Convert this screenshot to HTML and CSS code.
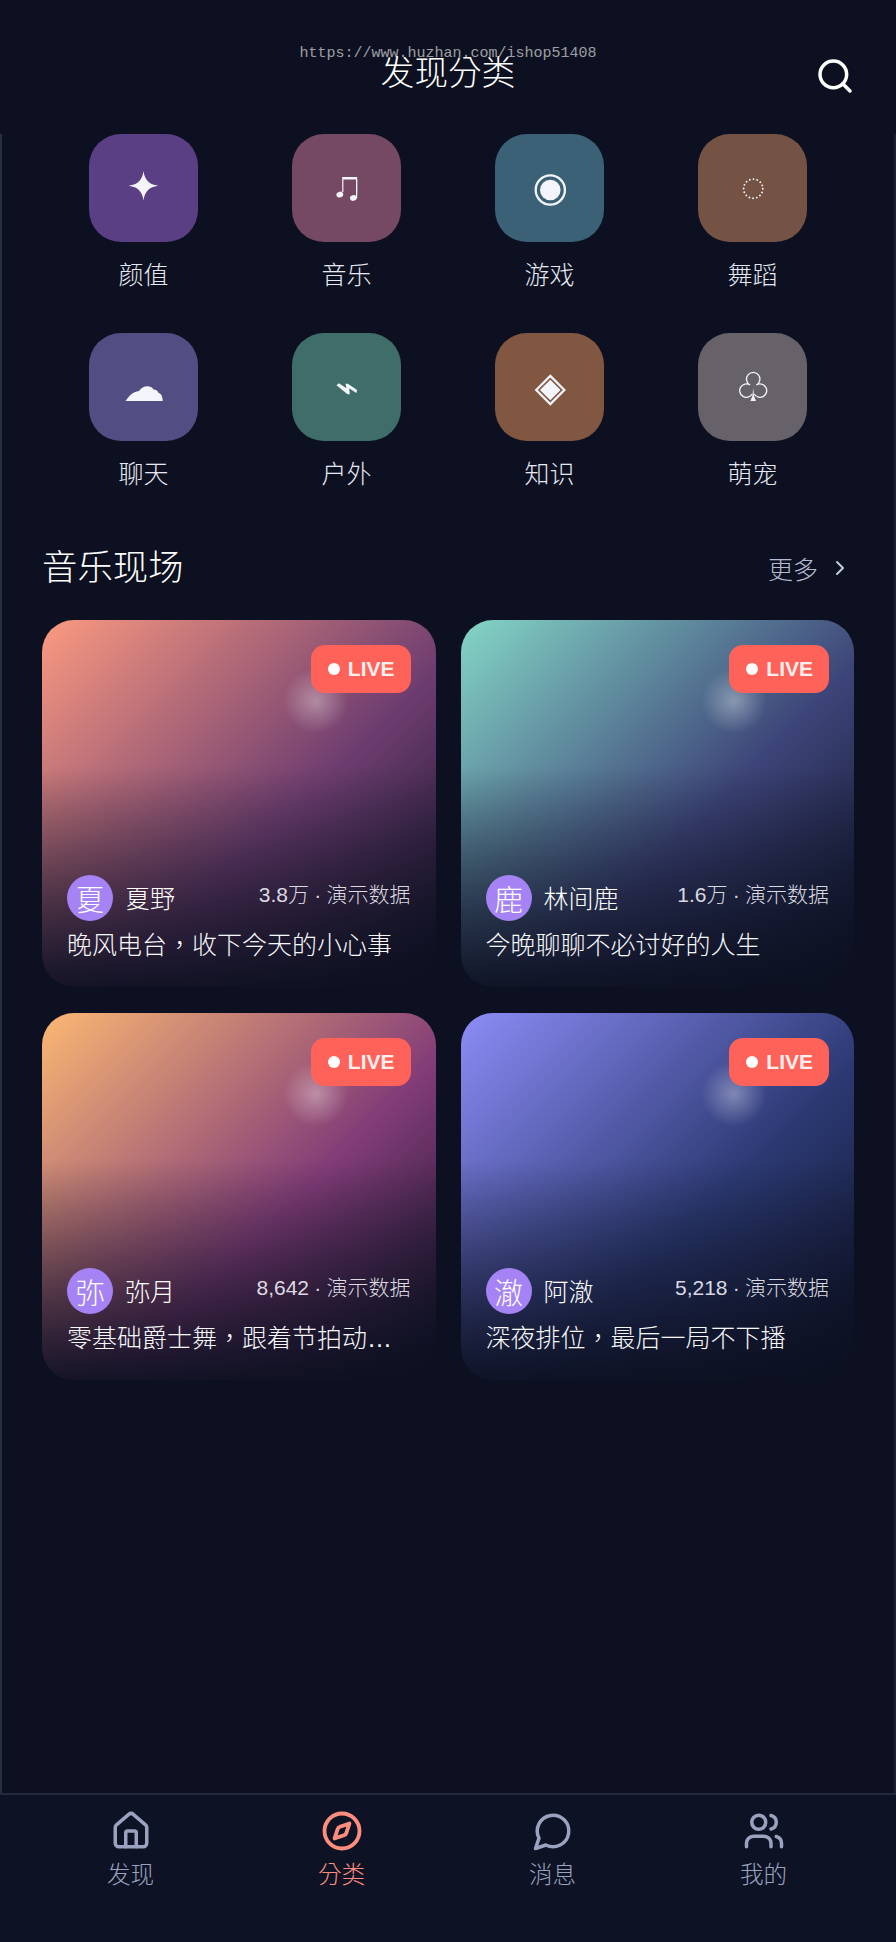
FILE: index.html
```html
<!DOCTYPE html>
<html>
<head>
  <meta charset="UTF-8">
  <meta name="viewport" content="width=device-width, initial-scale=1.0">
  <title>发现分类</title>
  <link rel="stylesheet" href="styles.css">
</head>
<body>
<div class="page">
  <div class="watermark">https://www.huzhan.com/ishop51408</div>

  <header class="top-bar">
    <h1 class="top-title">发现分类</h1>
    <svg class="search-icon" viewBox="0 0 24 24" fill="none" stroke="currentColor" stroke-width="2.1" stroke-linecap="round" stroke-linejoin="round">
      <path d="m21 21-4.34-4.34"/>
      <circle cx="11" cy="11" r="8"/>
    </svg>
  </header>

  <main class="content">
    <div class="cat-grid">
      <div class="cat">
        <div class="cat-tile tile-purple">
          <svg class="tile-icon" viewBox="0 0 60 60"><path fill="currentColor" d="M29.5 12C30.8 21 35 25.5 44.2 26.7 35 28 30.8 32.4 29.5 41.4 28.2 32.4 24 28 14.8 26.7 24 25.5 28.2 21 29.5 12Z"/></svg>
        </div>
        <span class="cat-name">颜值</span>
      </div>
      <div class="cat">
        <div class="cat-tile tile-rose">
          <svg class="tile-icon" viewBox="0 0 60 60" fill="currentColor">
            <path d="M25.2 18H40.2V35H39V20.6H26.4V33H25.2Z"/>
            <path d="M39 20H40.2V39H39Z"/>
            <ellipse cx="22.8" cy="35.6" rx="3.5" ry="2.8" transform="rotate(-20 22.8 35.6)"/>
            <ellipse cx="36.4" cy="38.9" rx="3.5" ry="2.8" transform="rotate(-20 36.4 38.9)"/>
          </svg>
        </div>
        <span class="cat-name">音乐</span>
      </div>
      <div class="cat">
        <div class="cat-tile tile-teal">
          <svg class="tile-icon" viewBox="0 0 60 60">
            <circle cx="30.3" cy="31" r="14.6" fill="none" stroke="currentColor" stroke-width="2.3"/>
            <circle cx="30.3" cy="31" r="10.3" fill="currentColor"/>
          </svg>
        </div>
        <span class="cat-name">游戏</span>
      </div>
      <div class="cat">
        <div class="cat-tile tile-brown">
          <svg class="tile-icon" viewBox="0 0 60 60">
            <circle cx="30.2" cy="29.7" r="9.6" fill="none" stroke="currentColor" stroke-width="1.9" stroke-linecap="round" stroke-dasharray="0 3.77"/>
          </svg>
        </div>
        <span class="cat-name">舞蹈</span>
      </div>
      <div class="cat">
        <div class="cat-tile tile-indigo">
          <svg class="tile-icon" viewBox="0 0 60 60"><path fill="currentColor" d="M11.5 43C14 39.5 16.5 36 20 34.5 22 33.5 23.5 33.5 25 33 27 29.5 31 28 34 28.3 37 28.5 38.5 30 39.5 31.5 42 31.5 44 33 44.5 35 47 35.5 48.6 38 48.8 43Z"/></svg>
        </div>
        <span class="cat-name">聊天</span>
      </div>
      <div class="cat">
        <div class="cat-tile tile-green">
          <svg class="tile-icon" viewBox="0 0 60 60"><path fill="currentColor" d="M19.5 27.3 21.8 25.3 29.5 30.3 28.5 25.7H30.8L40.2 32 39.2 35 32.2 30.3 32.8 36.3H30.5Z"/></svg>
        </div>
        <span class="cat-name">户外</span>
      </div>
      <div class="cat">
        <div class="cat-tile tile-copper">
          <svg class="tile-icon" viewBox="0 0 60 60">
            <path d="M30.3 17.9 44.4 32 30.3 46.1 16.2 32Z" fill="none" stroke="currentColor" stroke-width="2.2"/>
            <path d="M30.3 21.7 40.6 32 30.3 42.3 20 32Z" fill="currentColor"/>
          </svg>
        </div>
        <span class="cat-name">知识</span>
      </div>
      <div class="cat">
        <div class="cat-tile tile-gray">
          <svg class="tile-icon" viewBox="0 0 60 60">
            <path d="M27 27A6.7 6.7 0 1 1 33.4 27 6.7 6.7 0 1 1 31.2 36M27 27A6.7 6.7 0 1 0 29.2 36" fill="none" stroke="currentColor" stroke-width="1.3"/>
            <path d="M30.2 30 31 38 33 43H27.4L29.4 38Z" fill="currentColor"/>
          </svg>
        </div>
        <span class="cat-name">萌宠</span>
      </div>
    </div>

    <div class="section-head">
      <h2 class="section-title">音乐现场</h2>
      <div class="section-more">
        <span>更多</span>
        <svg class="more-icon" viewBox="0 0 24 24" fill="none" stroke="currentColor" stroke-width="2" stroke-linecap="round" stroke-linejoin="round"><path d="m9 18 6-6-6-6"/></svg>
      </div>
    </div>

    <div class="live-grid">
      <article class="live-card card-coral">
        <div class="glow"></div>
        <div class="live-badge"><i class="live-dot"></i>LIVE</div>
        <div class="live-info">
          <div class="live-row">
            <div class="avatar">夏</div>
            <span class="host">夏野</span>
            <span class="meta">3.8万 · 演示数据</span>
          </div>
          <div class="live-title">晚风电台，收下今天的小心事</div>
        </div>
      </article>
      <article class="live-card card-mint">
        <div class="glow"></div>
        <div class="live-badge"><i class="live-dot"></i>LIVE</div>
        <div class="live-info">
          <div class="live-row">
            <div class="avatar">鹿</div>
            <span class="host">林间鹿</span>
            <span class="meta">1.6万 · 演示数据</span>
          </div>
          <div class="live-title">今晚聊聊不必讨好的人生</div>
        </div>
      </article>
      <article class="live-card card-amber">
        <div class="glow"></div>
        <div class="live-badge"><i class="live-dot"></i>LIVE</div>
        <div class="live-info">
          <div class="live-row">
            <div class="avatar">弥</div>
            <span class="host">弥月</span>
            <span class="meta">8,642 · 演示数据</span>
          </div>
          <div class="live-title">零基础爵士舞，跟着节拍动…</div>
        </div>
      </article>
      <article class="live-card card-violet">
        <div class="glow"></div>
        <div class="live-badge"><i class="live-dot"></i>LIVE</div>
        <div class="live-info">
          <div class="live-row">
            <div class="avatar">澈</div>
            <span class="host">阿澈</span>
            <span class="meta">5,218 · 演示数据</span>
          </div>
          <div class="live-title">深夜排位，最后一局不下播</div>
        </div>
      </article>
    </div>
  </main>

  <nav class="tab-bar">
    <div class="tab">
      <svg class="tab-icon" viewBox="0 0 24 24" fill="none" stroke="currentColor" stroke-width="2" stroke-linecap="round" stroke-linejoin="round">
        <path d="M15 21v-8a1 1 0 0 0-1-1h-4a1 1 0 0 0-1 1v8"/>
        <path d="M3 10a2 2 0 0 1 .709-1.528l7-5.999a2 2 0 0 1 2.582 0l7 5.999A2 2 0 0 1 21 10v9a2 2 0 0 1-2 2H5a2 2 0 0 1-2-2z"/>
      </svg>
      <span>发现</span>
    </div>
    <div class="tab tab-active">
      <svg class="tab-icon" viewBox="0 0 24 24" fill="none" stroke="currentColor" stroke-width="2.2" stroke-linecap="round" stroke-linejoin="round">
        <circle cx="12" cy="12" r="10"/>
        <path d="m16.24 7.76-1.804 5.411a2 2 0 0 1-1.265 1.265L7.76 16.24l1.804-5.411a2 2 0 0 1 1.265-1.265z"/>
      </svg>
      <span>分类</span>
    </div>
    <div class="tab">
      <svg class="tab-icon" viewBox="0 0 24 24" fill="none" stroke="currentColor" stroke-width="2" stroke-linecap="round" stroke-linejoin="round">
        <path d="M7.9 20A9 9 0 1 0 4 16.1L2 22Z"/>
      </svg>
      <span>消息</span>
    </div>
    <div class="tab">
      <svg class="tab-icon" viewBox="0 0 24 24" fill="none" stroke="currentColor" stroke-width="2" stroke-linecap="round" stroke-linejoin="round">
        <path d="M16 21v-2a4 4 0 0 0-4-4H6a4 4 0 0 0-4 4v2"/>
        <circle cx="9" cy="7" r="4"/>
        <path d="M22 21v-2a4 4 0 0 0-3-3.87"/>
        <path d="M16 3.13a4 4 0 0 1 0 7.75"/>
      </svg>
      <span>我的</span>
    </div>
  </nav>
</div>
</body>
</html>
```

FILE: styles.css
```css
* {
  box-sizing: border-box;
}
body {
  margin: 0;
  background-color: #0c1020;
  color: #f3f5fb;
  font-family: "Liberation Sans", "Noto Sans CJK TC", sans-serif;
  font-weight: 300;
}
.page {
  position: relative;
  display: flex;
  flex-direction: column;
  height: 1942px;
  overflow: hidden;
}
.watermark {
  position: absolute;
  top: 44px;
  left: 0;
  width: 100%;
  text-align: center;
  font-family: "Liberation Mono", monospace;
  font-size: 15px;
  line-height: 20px;
  font-weight: 400;
  color: rgba(255, 255, 255, 0.6);
}

/* header */
.top-bar {
  display: grid;
  grid-template-columns: 1fr auto 1fr;
  align-items: center;
  height: 134px;
  padding: 10px 41px 0;
}
.top-title {
  grid-column: 2;
  margin: 0 0 4px;
  font-size: 33.6px;
  font-weight: 300;
  color: #fff;
}
.search-icon {
  justify-self: end;
  width: 40px;
  height: 40px;
  margin-top: 8px;
  color: #fff;
}

/* middle */
.content {
  flex: 1;
  padding: 0 40px;
  border-left: 2px solid #2a2f3e;
  border-right: 2px solid #1b1f2e;
}
.cat-grid {
  display: grid;
  grid-template-columns: repeat(4, 1fr);
  row-gap: 40px;
}
.cat {
  display: flex;
  flex-direction: column;
  align-items: center;
  gap: 16px;
}
.cat-tile {
  display: flex;
  align-items: center;
  justify-content: center;
  width: 109px;
  height: 108px;
  border-radius: 32px;
  color: #f3f5fb;
}
.tile-icon {
  width: 60px;
  height: 60px;
  margin-top: 2px;
}
.cat-name {
  font-size: 25px;
  line-height: 35px;
  color: #e6e9f4;
}
.tile-purple { background-color: #5a3f85; }
.tile-rose { background-color: #754863; }
.tile-teal { background-color: #3b6176; }
.tile-brown { background-color: #745344; }
.tile-indigo { background-color: #524e83; }
.tile-green { background-color: #3f6e6a; }
.tile-copper { background-color: #825741; }
.tile-gray { background-color: #67626a; }

.section-head {
  display: flex;
  justify-content: space-between;
  align-items: center;
  margin: 51px 0 27px;
}
.section-title {
  margin: 0;
  font-size: 35.4px;
  line-height: 50px;
  font-weight: 300;
  color: #fff;
}
.section-more {
  display: flex;
  align-items: center;
  gap: 10px;
  margin-right: 2px;
  font-size: 25px;
  color: #b4bad0;
}
.more-icon {
  width: 24px;
  height: 24px;
  color: #c5cad9;
}

/* live cards */
.live-grid {
  display: grid;
  grid-template-columns: 1fr 1fr;
  gap: 26px 25px;
}
.live-card {
  position: relative;
  display: flex;
  flex-direction: column;
  justify-content: flex-end;
  height: 367px;
  padding: 0 25px 24px;
  border-radius: 32px;
  overflow: hidden;
}
.card-coral {
  background: linear-gradient(180deg, rgba(12, 16, 32, 0) 40%, rgba(12, 16, 32, 0.93) 100%),
    linear-gradient(135deg, #fb9a80 0%, #6e3d70 58%, #0c1024 100%);
}
.card-mint {
  background: linear-gradient(180deg, rgba(12, 16, 32, 0) 40%, rgba(12, 16, 32, 0.93) 100%),
    linear-gradient(135deg, #84d6c6 0%, #3d4478 58%, #0c1024 100%);
}
.card-amber {
  background: linear-gradient(180deg, rgba(12, 16, 32, 0) 40%, rgba(12, 16, 32, 0.93) 100%),
    linear-gradient(135deg, #fbb873 0%, #823c78 58%, #0c1024 100%);
}
.card-violet {
  background: linear-gradient(180deg, rgba(12, 16, 32, 0) 40%, rgba(12, 16, 32, 0.93) 100%),
    linear-gradient(135deg, #8d8cf6 0%, #2c3a74 58%, #0c1024 100%);
}
.glow {
  position: absolute;
  top: 48px;
  right: 87px;
  width: 66px;
  height: 66px;
  border-radius: 50%;
  background: radial-gradient(circle, rgba(255, 255, 255, 0.34) 0%, rgba(255, 255, 255, 0) 70%);
}
.live-badge {
  position: absolute;
  top: 25px;
  right: 25px;
  display: flex;
  align-items: center;
  gap: 8px;
  height: 48px;
  padding: 0 16px 0 17px;
  border-radius: 14px;
  background-color: #ff6259;
  font-size: 21px;
  font-weight: 700;
  color: #fbeeee;
}
.live-dot {
  width: 12px;
  height: 12px;
  border-radius: 50%;
  background-color: #fff;
}
.live-row {
  display: flex;
  align-items: center;
}
.avatar {
  display: flex;
  align-items: center;
  justify-content: center;
  width: 46px;
  height: 46px;
  border-radius: 50%;
  background-color: #a583f5;
  font-size: 29px;
  color: #fff;
  flex-shrink: 0;
}
.host {
  margin: 0 0 3px 12px;
  font-size: 25px;
  color: #fff;
}
.meta {
  margin: 3px 0 0 auto;
  font-size: 21px;
  word-spacing: -0.6px;
  color: rgba(245, 245, 252, 0.88);
  align-self: flex-start;
}
.live-title {
  margin-top: 7px;
  font-size: 25px;
  line-height: 35px;
  color: #f7f8fc;
  white-space: nowrap;
}

/* bottom tabs */
.tab-bar {
  display: grid;
  grid-template-columns: repeat(4, 211px);
  justify-content: center;
  height: 149px;
  padding: 15px 2px 0 0;
  border-top: 2px solid #23283a;
  background-color: #0e1225;
}
.tab {
  display: flex;
  flex-direction: column;
  align-items: center;
  gap: 7px;
  font-size: 23.6px;
  line-height: 33px;
  color: #9aa2bf;
}
.tab-active {
  color: #ff8d7e;
}
.tab-icon {
  width: 42px;
  height: 42px;
}
```
